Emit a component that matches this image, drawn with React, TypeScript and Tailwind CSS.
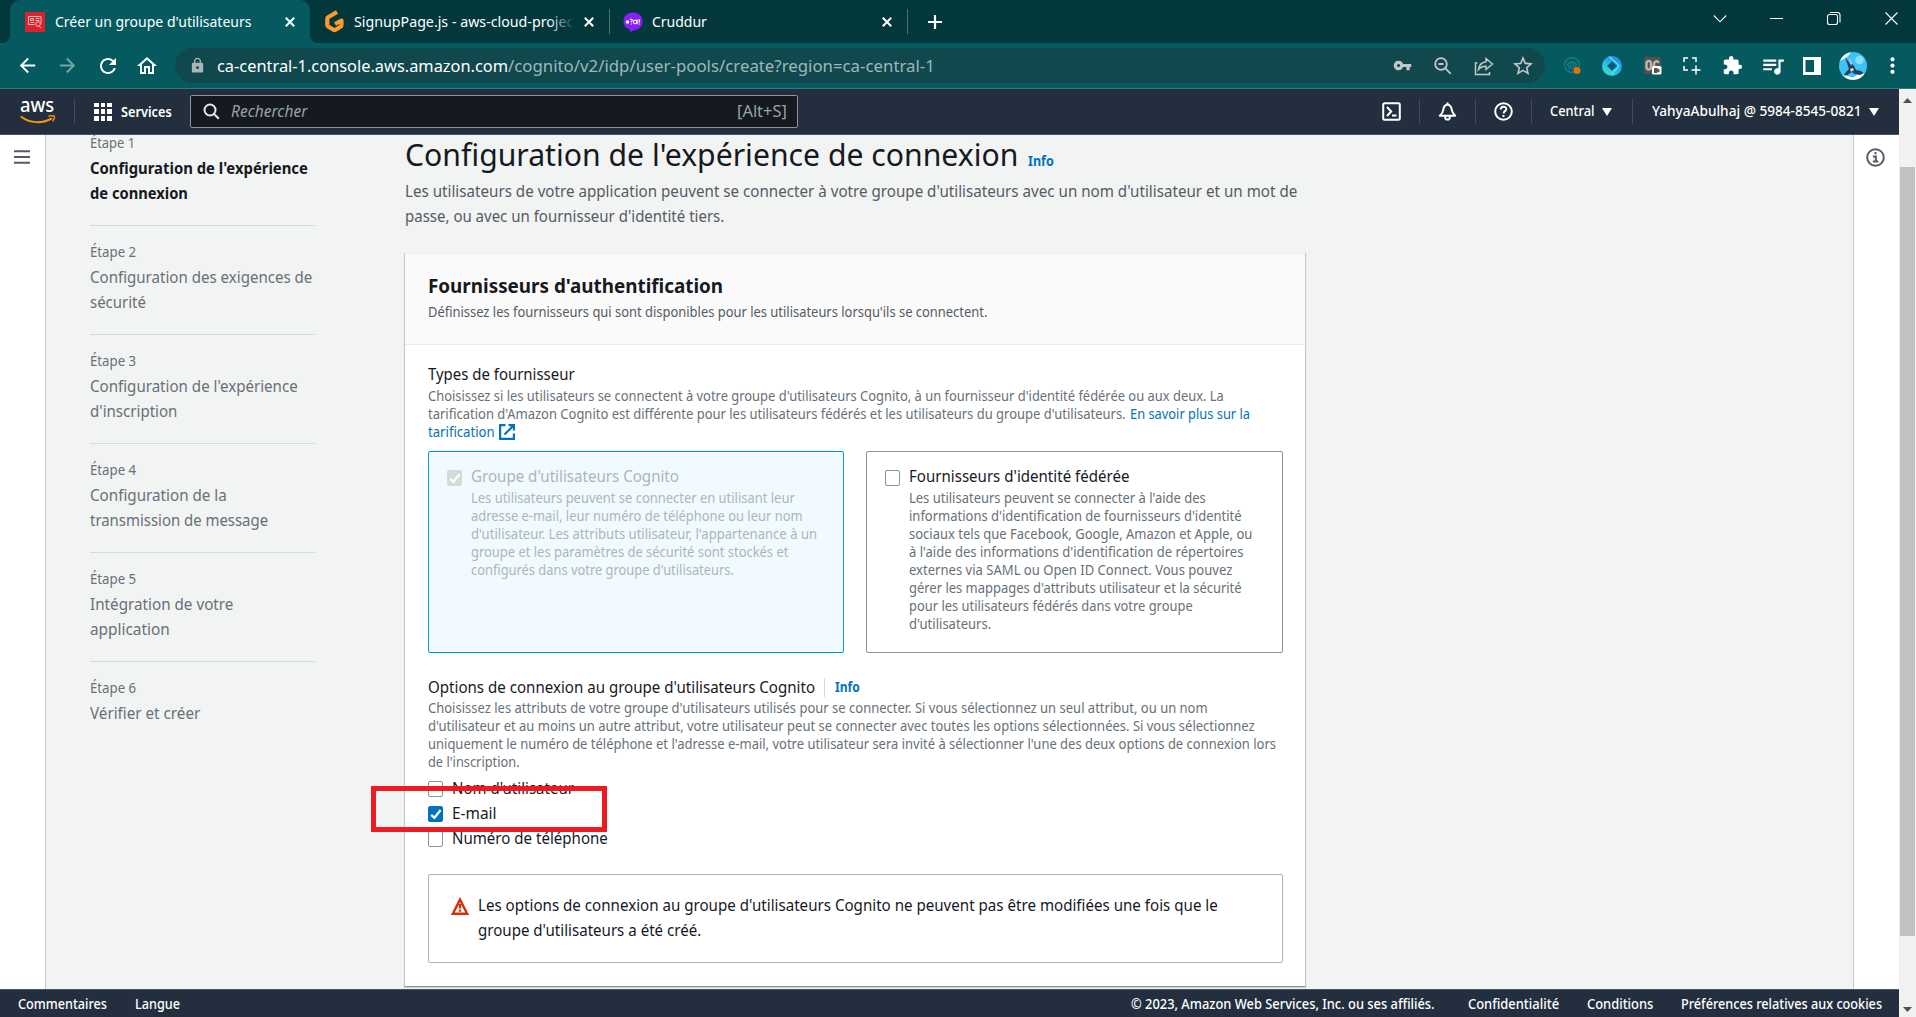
import React, { useLayoutEffect, useRef, useState } from "react";
import {
  MdArrowBack,
  MdArrowForward,
  MdExtension,
  MdLock,
  MdMoreVert,
  MdOutlineHome,
  MdQueueMusic,
  MdRefresh,
  MdStarBorder,
  MdVpnKey,
} from "react-icons/md";

/* One line of text condensed or stretched to an exact width. */
function Fit({ w, className = "", children }: { w: number; className?: string; children: React.ReactNode }) {
  const ref = useRef<HTMLSpanElement>(null);
  const [scale, setScale] = useState(1);
  useLayoutEffect(() => {
    if (ref.current) setScale(w / ref.current.offsetWidth);
  }, [w]);
  return (
    <span className={"inline-block whitespace-nowrap align-baseline " + className} style={{ width: w }}>
      <span ref={ref} className="inline-block origin-left" style={{ transform: `scaleX(${scale})` }}>
        {children}
      </span>
    </span>
  );
}

type Line = [string, number];

function Lines({ lines }: { lines: Line[] }) {
  return (
    <>
      {lines.map(([text, w]) => (
        <div key={text} className="flex">
          <Fit w={w}>{text}</Fit>
        </div>
      ))}
    </>
  );
}

function CloseX({ className }: { className: string }) {
  return (
    <svg className={"h-[10px] w-[10px] shrink-0 " + className} viewBox="0 0 10 10" stroke="#fff" strokeWidth="2" fill="none">
      <path d="M.8.8l8.4 8.4M9.2.8L.8 9.2" />
    </svg>
  );
}

function TabStrip() {
  return (
    <div className="flex h-[43px] bg-[#02383c] pl-[2px] text-[15px] leading-[40px] text-white">
      <svg className="h-[8px] w-[8px] self-end" viewBox="0 0 8 8">
        <path d="M8 0v8H0a8 8 0 0 0 8-8z" fill="#045a5f" />
      </svg>
      <div className="flex w-[300px] items-center rounded-t-[10px] bg-[#045a5f] pl-[15px]">
        <svg className="h-[20px] w-[20px]" viewBox="0 0 20 20">
          <rect width="20" height="20" fill="#d8232f" />
          <path d="M3.5 4.500h12.500v7M3.500 4.500v8h6M5.500 6.500h3v2h-3zM10.500 6.500h4M10.500 8.500h4M5.500 10.500h4" stroke="#f6b3b8" fill="none" strokeWidth="1" />
          <circle cx="13" cy="12" r="2.300" stroke="#f6b3b8" fill="none" />
          <path d="M14 14l2 2" stroke="#f6b3b8" />
        </svg>
        <Fit w={196} className="ml-[10px] h-[42px]">Créer un groupe d'utilisateurs</Fit>
        <CloseX className="ml-[34px]" />
      </div>
      <svg className="h-[8px] w-[8px] self-end" viewBox="0 0 8 8">
        <path d="M0 0v8h8a8 8 0 0 1-8-8z" fill="#045a5f" />
      </svg>
      <div className="flex w-[291px] items-center pl-[7px]">
        <svg className="h-[24px] w-[19px]" viewBox="0 0 19 24" fill="none" stroke="#ff9a2b" strokeWidth="4.200" strokeLinejoin="round">
          <path d="M12 2L3.500 7a2 2 0 0 0-1.200 1.800V15a2 2 0 0 0 1.200 1.800l5 3a2 2 0 0 0 2 0l5-3a2 2 0 0 0 1-1.800v-4.500L10 14" />
        </svg>
        <div className="relative ml-[10px] h-[42px] w-[220px]">
          <Fit w={219}>SignupPage.js - aws-cloud-projec</Fit>
          <div className="absolute inset-y-0 right-0 w-[26px] bg-gradient-to-r from-transparent to-[#02383c]" />
        </div>
        <CloseX className="ml-[10px]" />
      </div>
      <div className="my-[9px] w-px bg-[#4b7275]" />
      <div className="flex w-[297px] items-center pl-[13px]">
        <svg className="h-[20px] w-[20px]" viewBox="0 0 20 20">
          <path d="M10 .5c5.500 0 9.500 3.500 9.500 8.500 0 3-1 5.500-3.500 7.500-1.500 1.200-3 1.500-5 1.700-1.500 1-3 1.500-5 1.300.8-.6 1.200-1.200 1-2C3 16.500.5 13 .5 9 .5 4 4.500.5 10 .5z" fill="#8a1ff5" />
          <circle cx="4.500" cy="10" r="1.800" fill="#fff" />
          <g fill="none" stroke="#fff" strokeWidth="1.100">
            <path d="M7.300 8c.3-1.300 2.200-1 1.900.3-.2.800-.9.900-.9 1.900M8.300 11.500v1" />
            <circle cx="12.200" cy="10" r="1.800" />
            <path d="M14 7.500v4.800M16.200 7v3.800M16.200 11.500v1" />
          </g>
        </svg>
        <Fit w={55} className="ml-[9px] h-[42px]">Cruddur</Fit>
        <CloseX className="ml-[175px]" />
      </div>
      <div className="my-[9px] w-px bg-[#4b7275]" />
      <svg className="ml-[20px] h-[14px] w-[14px] self-center" viewBox="0 0 14 14" stroke="#fff" strokeWidth="2.200">
        <path d="M7 0v14M0 7h14" />
      </svg>
      <svg className="ml-auto mr-[18px] mt-[11px] h-[15px] w-[185px]" viewBox="0 0 185 15" fill="none" stroke="#fff" strokeWidth="1.100">
        <path d="M.8 4.500L7 10.800l6.200-6.300M57 7.500h13M172.500 1.500l12 12M184.500 1.500l-12 12" />
        <rect x="114.500" y="3.500" width="10" height="10" rx="2" />
        <path d="M117 1.500h7.500a2.500 2.500 0 0 1 2.500 2.500v7.500" />
      </svg>
    </div>
  );
}

function Toolbar() {
  return (
    <div className="flex h-[46px] items-center border-b border-[#38777b] bg-[#045a5f] pl-[16px] text-white">
      <MdArrowBack className="h-[23px] w-[23px]" />
      <MdArrowForward className="ml-[17px] h-[23px] w-[23px] opacity-45" />
      <MdRefresh className="ml-[17px] h-[24px] w-[24px]" />
      <MdOutlineHome className="ml-[15px] h-[24px] w-[24px]" />
      <div className="ml-[16px] flex h-[35px] w-[1370px] items-center rounded-full bg-[#10484d] pl-[14px] text-[17px] leading-[35px] text-[#9fb8ba]">
        <MdLock className="h-[17px] w-[17px] text-[#a9b5b7]" />
        <Fit w={291} className="ml-[11px] text-white">ca-central-1.console.aws.amazon.com</Fit>
        <Fit w={427}>/cognito/v2/idp/user-pools/create?region=ca-central-1</Fit>
        <div className="ml-auto flex items-center pr-[10px] text-[#c3c8c9]">
          <MdVpnKey className="h-[19px] w-[19px]" />
          <svg className="ml-[22px] h-[18px] w-[18px]" viewBox="0 0 18 18" fill="none" stroke="currentColor" strokeWidth="1.800">
            <circle cx="7" cy="7" r="5.800" />
            <path d="M4.500 7h5M11.200 11.200l5.600 5.600" />
          </svg>
          <svg className="ml-[22px] h-[20px] w-[20px]" viewBox="0 0 20 20" fill="none" stroke="currentColor" strokeWidth="1.500">
            <path d="M3.500 7H1.500v11.500h14V16M12 2.500l6.500 5.500-6.500 5.500v-3.200c-3 0-5.500.8-7.500 3.200.5-4 3-7.200 7.500-7.800z" />
          </svg>
          <MdStarBorder className="ml-[17px] h-[24px] w-[24px]" />
        </div>
      </div>
      <svg className="ml-[19px] h-[20px] w-[18px]" viewBox="0 0 18 20" fill="none" stroke="#15828b" strokeWidth="1.200">
        <circle cx="8" cy="9" r="7.400" />
        <path d="M3.500 8.500c2-3.500 7-3.500 9 0-1.500 3-3 4-4.500 4s-3.500-1-4.500-4z" />
        <circle cx="8" cy="8.300" r="1.600" fill="#0c464c" />
        <circle cx="13" cy="14.500" r="3.500" fill="#e8710a" stroke="none" />
      </svg>
      <svg className="ml-[20px] h-[20px] w-[20px]" viewBox="0 0 20 20">
        <defs>
          <linearGradient id="swirl" x1="1" y1="0" x2="0.2" y2="1">
            <stop offset="0" stopColor="#2f7bf2" />
            <stop offset="0.45" stopColor="#20a9e8" />
            <stop offset="1" stopColor="#3fe6cf" />
          </linearGradient>
        </defs>
        <circle cx="10" cy="10" r="10" fill="url(#swirl)" />
        <path d="M7 .5l9 8c1 1 1 2 0 3L9.500 18" fill="none" stroke="#5be6e6" strokeWidth="1.200" />
        <path d="M10 5.200l4.800 4.800-4.800 4.800L5.200 10z" fill="#0c5a72" />
      </svg>
      <svg className="ml-[22px] h-[18px] w-[18px]" viewBox="0 0 18 18">
        <rect width="17" height="17" rx="2" fill="#57504e" />
        <g fill="none" stroke="#bdb8b6" strokeWidth="2.400">
          <rect x="2.500" y="4" width="4.500" height="8.500" rx="2.200" />
          <path d="M14.500 6c-.5-2.500-4.500-2.500-4.500 1.500v3" />
        </g>
        <rect x="8" y="9" width="9.500" height="8.500" rx="1.500" fill="#fff" />
        <path d="M10 11h3.500v1.500l2-1v4l-2-1V16H10z" fill="#57504e" />
      </svg>
      <svg className="ml-[21px] h-[18px] w-[18px]" viewBox="0 0 18 18" fill="none" stroke="#fff" strokeWidth="1.500">
        <path d="M5 1H1v4M9 1h4v4M1 9v4h4M13 8.500v9M8.500 13h9" />
      </svg>
      <MdExtension className="ml-[21px] h-[21px] w-[21px]" />
      <MdQueueMusic className="ml-[17px] h-[26px] w-[26px]" />
      <svg className="ml-[17px] h-[18px] w-[18px]" viewBox="0 0 18 18">
        <path d="M0 0h18v18H0zM2.500 3v12H11V3z" fill="#fff" fillRule="evenodd" />
      </svg>
      <svg className="ml-[18px] h-[28px] w-[28px]" viewBox="0 0 28 28">
        <circle cx="14" cy="14" r="14" fill="#3cc3f8" />
        <path d="M1 9a14 14 0 0 1 11-8.800l-4 5zM3 22.500a14 14 0 0 0 22 0l-1-3-4 2-6 4z" fill="#fff" />
        <circle cx="20.500" cy="8" r="4.300" fill="#8fdcfb" />
        <path d="M6 5l5 6.500 3.500 1.500 2.500 5 5 1 3 2-4 2-5-1-3.500-2-4 3-4 .5 2.500-3.500 3-3-1.500-4.500z" fill="#24405e" />
        <path d="M10 6l3 5-1 3zM11 17l3-1 1 2-3 2z" fill="#c9dbe8" />
      </svg>
      <MdMoreVert className="ml-[13px] h-[25px] w-[25px]" />
    </div>
  );
}

function Caret({ className }: { className: string }) {
  return (
    <svg className={"h-[8px] w-[10px] " + className} viewBox="0 0 10 8">
      <path d="M0 0h10L5 8z" fill="#fff" />
    </svg>
  );
}

function HeaderDivider({ className = "" }: { className?: string }) {
  return <div className={"h-[25px] w-px bg-[#414d5c] " + className} />;
}

function AwsHeader() {
  return (
    <div className="flex h-[46px] items-center border-b border-[#4a5564] bg-[#232f3e] pl-[20px] text-[14px] font-semibold leading-[44px] text-white">
      <div className="flex h-[26px] w-[36px] flex-col">
        <Fit w={34} className="h-[16px] text-[20px] font-medium leading-[12px]">aws</Fit>
        <svg className="h-[9px] w-[36px]" viewBox="0 0 36 9" fill="none" stroke="#f90" strokeWidth="2">
          <path d="M.8 1.500c9.500 7.200 22 7.200 31 1.800" />
          <path d="M28.500 1.200c3-.8 5-.6 5.800 0 .4 1-.3 3.200-1.700 5" strokeWidth="1.400" />
        </svg>
      </div>
      <HeaderDivider className="ml-[18px]" />
      <div className="ml-[19px] grid h-[18px] w-[18px] grid-cols-3 gap-[2px]">
        {[0, 1, 2, 3, 4, 5, 6, 7, 8].map((i) => (
          <div key={i} className="bg-white" />
        ))}
      </div>
      <Fit w={51} className="ml-[9px]">Services</Fit>
      <div className="ml-[18px] flex h-[33px] w-[608px] items-center rounded-[2px] border border-[#8d9499] bg-[#16191f] pl-[12px] pr-[10px] text-[15.75px] font-normal leading-[31px] text-[#95a5a6]">
        <svg className="h-[17px] w-[17px]" viewBox="0 0 17 17" fill="none" stroke="#e8eaea" strokeWidth="2">
          <circle cx="7" cy="7" r="5.500" />
          <path d="M11 11l4.800 4.800" />
        </svg>
        <Fit w={76} className="ml-[11px] italic">Rechercher</Fit>
        <Fit w={50} className="ml-auto h-[32px]">[Alt+S]</Fit>
      </div>
      <svg className="ml-[584px] h-[19px] w-[19px]" viewBox="0 0 19 19" fill="none" stroke="#fff" strokeWidth="2">
        <rect x="1.200" y="1.200" width="16.600" height="16.600" rx="1.500" />
        <path d="M5 5l4.200 4.500L5 14M10 13.500h4.500" />
      </svg>
      <HeaderDivider className="ml-[18px]" />
      <svg className="ml-[18px] h-[19px] w-[19px]" viewBox="0 0 19 19" fill="none" stroke="#fff" strokeWidth="2" strokeLinejoin="round">
        <path d="M9.500 2.500C6.500 3.200 5.500 5 5.200 8c-.2 2.500-1.500 4-3.400 5.800h15.400C15.300 12 14 10.500 13.800 8c-.3-3-1.300-4.800-4.300-5.500z" />
        <path d="M9.500 2.500V.5M7.200 14v1.500c0 2.800 4.600 2.800 4.600 0V14" />
      </svg>
      <HeaderDivider className="ml-[18px]" />
      <svg className="ml-[18px] h-[19px] w-[19px]" viewBox="0 0 19 19" fill="none" stroke="#fff" strokeWidth="2">
        <circle cx="9.500" cy="9.500" r="8.300" />
        <path d="M6.700 7.500c0-3.800 5.600-3.600 5.600-.3 0 1.900-2.800 2-2.800 4.300M9.500 13v2" />
      </svg>
      <HeaderDivider className="ml-[18px]" />
      <Fit w={45} className="ml-[18px] h-[45px] font-medium">Central</Fit>
      <Caret className="ml-[7px]" />
      <HeaderDivider className="ml-[20px]" />
      <Fit w={210} className="ml-[19px] h-[45px] font-medium">YahyaAbulhaj @ 5984-8545-0821</Fit>
      <Caret className="ml-[7px]" />
    </div>
  );
}

const steps: Line[][] = [
  [["Configuration de l'expérience", 218], ["de connexion", 98]],
  [["Configuration des exigences de", 222], ["sécurité", 56]],
  [["Configuration de l'expérience", 208], ["d'inscription", 87]],
  [["Configuration de la", 137], ["transmission de message", 178]],
  [["Intégration de votre", 143], ["application", 80]],
  [["Vérifier et créer", 110]],
];

function Steps() {
  return (
    <div className="-mt-[18px] ml-[44px] w-[225px] shrink-0 text-[15.75px] leading-[25px] text-[#687078]">
      {steps.map((lines, i) => (
        <div key={i} className={"h-[109px] pt-[14px] " + (i < 5 ? "border-b border-[#d5dbdb]" : "")}>
          <div className="flex text-[13.5px]">
            <Fit w={i === 0 ? 45 : 46}>Étape {i + 1}</Fit>
          </div>
          <div className={i === 0 ? "font-bold text-[#16191f]" : ""}>
            <Lines lines={lines} />
          </div>
        </div>
      ))}
    </div>
  );
}

function Check({ state, className = "" }: { state: "off" | "on" | "disabled"; className?: string }) {
  const look =
    state === "on"
      ? "border-[#0073bb] bg-[#0073bb]"
      : state === "disabled"
        ? "border-[#d5dbdb] bg-[#d5dbdb]"
        : "border-[#879596] bg-white";
  return (
    <div className={"flex h-[16px] w-[15px] shrink-0 items-center justify-center rounded-[2px] border " + look + " " + className}>
      {state !== "off" && (
        <svg className="h-[14px] w-[14px] shrink-0" viewBox="0 0 14 14" fill="none" stroke="#fff" strokeWidth="2.300">
          <path d="M2.200 7.800l3.200 3L11.600 3" />
        </svg>
      )}
    </div>
  );
}

function Tile({ title, titleW, lines, disabled = false }: { title: string; titleW: number; lines: Line[]; disabled?: boolean }) {
  return (
    <div
      className={
        "flex h-[202px] rounded-[2px] border pl-[18px] " +
        (disabled ? "w-[416px] border-[#00a1c9] bg-[#f1faff] text-[#aab7b8]" : "w-[417px] border-[#879596] bg-white text-[#687078]")
      }
    >
      <Check state={disabled ? "disabled" : "off"} className="mt-[18px]" />
      <div className="ml-[9px] pt-[12px] text-[13.5px] leading-[18px]">
        <div className={"flex text-[15.75px] leading-[25px] " + (disabled ? "" : "text-[#16191f]")}>
          <Fit w={titleW}>{title}</Fit>
        </div>
        <Lines lines={lines} />
      </div>
    </div>
  );
}

function Option({ label, w, on = false }: { label: string; w: number; on?: boolean }) {
  return (
    <div className="flex h-[25px] items-center">
      <Check state={on ? "on" : "off"} />
      <Fit w={w} className="ml-[9px]">{label}</Fit>
    </div>
  );
}

function ProviderCard() {
  return (
    <div className="mt-[24px] -ml-px h-[734px] w-[902px] border-x border-b border-[#c3c9ca] border-b-[#879596] bg-white shadow-[0_1px_1px_#d0d4d4]">
      <div className="h-[92px] border-y border-[#eaeded] bg-[#fafafa] pl-[23px] pt-[19px]">
        <div className="flex text-[20.25px] font-bold leading-[25px]">
          <Fit w={295}>Fournisseurs d'authentification</Fit>
        </div>
        <div className="mt-[5px] flex text-[13.5px] leading-[18px] text-[#545b64]">
          <Fit w={559}>Définissez les fournisseurs qui sont disponibles pour les utilisateurs lorsqu'ils se connectent.</Fit>
        </div>
      </div>
      <div className="px-[23px] pr-[22px] pt-[16px] text-[15.75px] leading-[25px]">
        <div className="flex leading-[26px]">
          <Fit w={147}>Types de fournisseur</Fit>
        </div>
        <div className="text-[13.5px] leading-[18px] text-[#687078]">
          <div className="flex">
            <Fit w={796}>Choisissez si les utilisateurs se connectent à votre groupe d'utilisateurs Cognito, à un fournisseur d'identité fédérée ou aux deux. La</Fit>
          </div>
          <div className="flex">
            <Fit w={698}>tarification d'Amazon Cognito est différente pour les utilisateurs fédérés et les utilisateurs du groupe d'utilisateurs.</Fit>
            <Fit w={120} className="ml-[4px] text-[#0073bb]">En savoir plus sur la</Fit>
          </div>
          <div className="flex items-center text-[#0073bb]">
            <Fit w={67}>tarification</Fit>
            <svg className="ml-[4px] h-[16px] w-[16px]" viewBox="0 0 16 16" fill="none" stroke="#0073bb" strokeWidth="2.200">
              <path d="M6.500 1.100H1.100v13.800h13.800V9.500M9.500 1.100h5.400v5.400M14.500 1.500L5.500 10.500" />
            </svg>
          </div>
        </div>
        <div className="mt-[10px] flex gap-[22px]">
          <Tile
            disabled
            title="Groupe d'utilisateurs Cognito"
            titleW={208}
            lines={[
              ["Les utilisateurs peuvent se connecter en utilisant leur", 324],
              ["adresse e-mail, leur numéro de téléphone ou leur nom", 332],
              ["d'utilisateur. Les attributs utilisateur, l'appartenance à un", 346],
              ["groupe et les paramètres de sécurité sont stockés et", 317],
              ["configurés dans votre groupe d'utilisateurs.", 263],
            ]}
          />
          <Tile
            title="Fournisseurs d'identité fédérée"
            titleW={220}
            lines={[
              ["Les utilisateurs peuvent se connecter à l'aide des", 297],
              ["informations d'identification de fournisseurs d'identité", 333],
              ["sociaux tels que Facebook, Google, Amazon et Apple, ou", 343],
              ["à l'aide des informations d'identification de répertoires", 334],
              ["externes via SAML ou Open ID Connect. Vous pouvez", 323],
              ["gérer les mappages d'attributs utilisateur et la sécurité", 333],
              ["pour les utilisateurs fédérés dans votre groupe", 284],
              ["d'utilisateurs.", 82],
            ]}
          />
        </div>
        <div className="mt-[22px] flex h-[24px]">
          <Fit w={387}>Options de connexion au groupe d'utilisateurs Cognito</Fit>
          <div className="ml-[9px] mt-[3px] h-[19px] w-px bg-[#d5dbdb]" />
          <Fit w={25} className="ml-[10px] text-[13.5px] font-bold text-[#0073bb]">Info</Fit>
        </div>
        <div className="text-[13.5px] leading-[18px] text-[#687078]">
          <Lines
            lines={[
              ["Choisissez les attributs de votre groupe d'utilisateurs utilisés pour se connecter. Si vous sélectionnez un seul attribut, ou un nom", 780],
              ["d'utilisateur et au moins un autre attribut, votre utilisateur peut se connecter avec toutes les options sélectionnées. Si vous sélectionnez", 827],
              ["uniquement le numéro de téléphone et l'adresse e-mail, votre utilisateur sera invité à sélectionner l'une des deux options de connexion lors", 848],
              ["de l'inscription.", 92],
            ]}
          />
        </div>
        <div className="relative mt-[5px]">
          <Option label="Nom d'utilisateur" w={122} />
          <Option label="E-mail" w={45} on />
          <Option label="Numéro de téléphone" w={156} />
          <div className="absolute -left-[57px] top-[10px] h-[46px] w-[236px] border-[5px] border-[#f01b22]" />
        </div>
        <div className="mt-[23px] flex h-[89px] rounded-[2px] border border-[#aab7b8] pl-[22px] pt-[18px]">
          <svg className="mt-[4px] h-[18px] w-[18px]" viewBox="0 0 18 18" fill="none" stroke="#d13212" strokeWidth="2.400">
            <path d="M9 2.600L1.900 16.700h14.200zM9 7v4.500" />
            <path d="M9 12.500v2.200" />
          </svg>
          <div className="ml-[9px]">
            <Lines
              lines={[
                ["Les options de connexion au groupe d'utilisateurs Cognito ne peuvent pas être modifiées une fois que le", 740],
                ["groupe d'utilisateurs a été créé.", 223],
              ]}
            />
          </div>
        </div>
      </div>
    </div>
  );
}

function Footer() {
  return (
    <div className="flex h-[28px] border-t border-[#4a5564] bg-[#232f3e] pl-[18px] pr-[17px] text-[13.5px] font-medium leading-[28px] text-white">
      <Fit w={89}>Commentaires</Fit>
      <Fit w={45} className="ml-[28px]">Langue</Fit>
      <Fit w={304} className="ml-auto">© 2023, Amazon Web Services, Inc. ou ses affiliés.</Fit>
      <Fit w={91} className="ml-[33px]">Confidentialité</Fit>
      <Fit w={66} className="ml-[28px]">Conditions</Fit>
      <Fit w={201} className="ml-[28px]">Préférences relatives aux cookies</Fit>
    </div>
  );
}

export default function App() {
  return (
    <div className="flex h-[1017px] w-[1916px] flex-col overflow-hidden bg-[#f2f3f3] font-['Noto_Sans','Open_Sans',sans-serif] text-[#16191f]">
      <TabStrip />
      <Toolbar />
      <div className="flex h-[928px]">
        <div className="flex w-[1899px] flex-col">
          <AwsHeader />
          <div className="flex h-[854px] overflow-hidden">
            <div className="w-[46px] shrink-0 border-r border-[#c3c9ca] bg-white pl-[14px] pt-[15px]">
              <svg className="h-[14px] w-[16px]" viewBox="0 0 16 14" stroke="#545b64" strokeWidth="2">
                <path d="M0 1.300h16M0 7h16M0 12.700h16" />
              </svg>
            </div>
            <Steps />
            <div className="ml-[90px] w-[900px] shrink-0">
              <div className="flex h-[38px] text-[31.5px] leading-[38px]">
                <Fit w={613}>Configuration de l'expérience de connexion</Fit>
                <Fit w={26} className="ml-[10px] pt-[7px] text-[13.5px] font-bold text-[#0073bb]">Info</Fit>
              </div>
              <div className="mt-[6px] text-[15.75px] leading-[25px] text-[#545b64]">
                <Lines
                  lines={[
                    ["Les utilisateurs de votre application peuvent se connecter à votre groupe d'utilisateurs avec un nom d'utilisateur et un mot de", 892],
                    ["passe, ou avec un fournisseur d'identité tiers.", 319],
                  ]}
                />
              </div>
              <ProviderCard />
            </div>
            <div className="ml-auto w-[46px] shrink-0 border-l border-[#c3c9ca] bg-white pl-[12px] pt-[13px]">
              <svg className="h-[19px] w-[19px]" viewBox="0 0 19 19" fill="none" stroke="#545b64" strokeWidth="2">
                <circle cx="9.500" cy="9.500" r="8.300" />
                <path d="M9.500 4v2.200M7 8.500h2.800v5M6.800 13.500h5.600" />
              </svg>
            </div>
          </div>
          <Footer />
        </div>
        <div className="flex w-[17px] flex-col items-center bg-[#f1f1f1]">
          <svg className="mt-[9px] h-[5px] w-[9px] shrink-0" viewBox="0 0 9 5">
            <path d="M0 5h9L4.500 0z" fill="#505050" />
          </svg>
          <div className="mt-[64px] h-[769px] w-[15px] bg-[#c1c1c1]" />
          <svg className="mb-[5px] mt-auto h-[5px] w-[9px] shrink-0" viewBox="0 0 9 5">
            <path d="M0 0h9L4.500 5z" fill="#505050" />
          </svg>
        </div>
      </div>
    </div>
  );
}
